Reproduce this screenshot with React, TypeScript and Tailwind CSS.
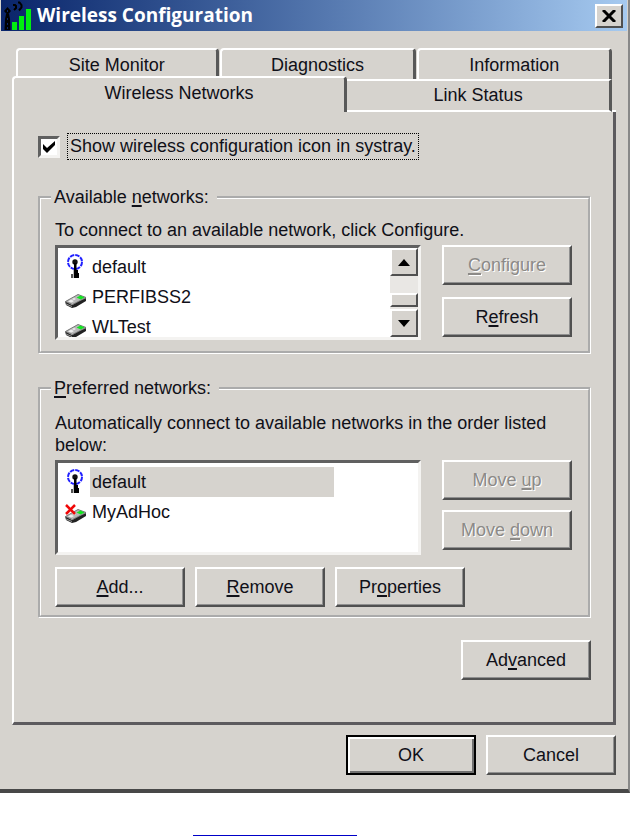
import { useState, type ReactNode } from "react";
import { clsx } from "clsx";

const raised = "border-2 border-t-white border-l-white border-r-[#505050] border-b-[#505050]";
const sunken = "border-[3px] border-t-[#606060] border-l-[#606060] border-r-[#f4f3f1] border-b-[#f4f3f1]";

interface ButtonProps {
  children: ReactNode;
  disabled?: boolean;
  primary?: boolean;
}

const Button = ({ children, disabled, primary }: ButtonProps) => (
  <button
    type="button"
    disabled={disabled}
    className={clsx(
      "h-10 w-[130px] shrink-0 bg-[#d6d3ce]",
      primary
        ? "border-2 border-black shadow-[inset_2px_2px_0_#fff,inset_-2px_-2px_0_#707070]"
        : "border-2 border-t-white border-l-white border-r-[#505050] border-b-[#505050] shadow-[inset_-1px_-1px_0_#909090]",
      disabled && "text-[#8c8a87] [text-shadow:1px_1px_0_#fff]",
    )}
  >
    {children}
  </button>
);

const Key = ({ children }: { children: ReactNode }) => (
  <span className="underline decoration-2 underline-offset-2">{children}</span>
);

const AppIcon = () => (
  <svg width="28" height="30" viewBox="0 0 28 30" aria-hidden="true">
    <g fill="#00f010">
      <rect x="8" y="21" width="5" height="8" />
      <rect x="15" y="15" width="5" height="14" />
      <rect x="22" y="8" width="5" height="21" />
    </g>
    <path d="M3.500 6l3.500 4-3.500 4L0 10z" fill="#000" />
    <path d="M2 13h3l1 5 .5 11h-6L1 18z" fill="#000" />
    <path d="M3.500 9v2M3.500 17v2M3.500 22v2M3.500 26v2" stroke="#0a246a" strokeWidth="1" />
    <g fill="none" stroke="#000" strokeWidth="2">
      <path d="M9 4h2l1 1v2l-2 2" />
      <path d="M14 1.500h1.500l2 2.500v2.500L15 9.500" />
    </g>
  </svg>
);

const AntennaIcon = () => (
  <svg className="shrink-0" width="22" height="26" viewBox="0 0 22 26" aria-hidden="true">
    <circle cx="10" cy="8" r="7" fill="none" stroke="#2020ff" strokeWidth="2" strokeDasharray="4.500 1" />
    <circle cx="10" cy="8" r="2.700" fill="#111" />
    <path d="M9 9h2.500v7H13v3h1v5H9z" fill="#000" />
    <path d="M6 20h2v4H6z" fill="#555" />
    <path d="M8.500 16v8" stroke="#bbb" strokeWidth="1" />
  </svg>
);

const AdapterIcon = ({ offline }: { offline?: boolean }) => (
  <svg className="shrink-0" width="22" height="26" viewBox="0 0 22 26" aria-hidden="true">
    <path d="M0 17l1 4 6 3 4-1 10-6v-3l-7 3-7 4z" fill="#222" />
    <path d="M.5 17.500L13 10.500l8 3-13.500 7z" fill="#b8b8b8" stroke="#777" strokeWidth="1" />
    <path d="M3 17.500l3-2 3 1.500-2.500 1.500zM7 15l2-1 2 1-2 1z" fill="#eee" />
    <path d="M1 20l6 2.500" stroke="#999" strokeWidth="1" />
    <path d="M11.500 13.500l4-2 4 2-4 2z" fill="#10e820" />
    {offline && <path d="M1 6l9 9M10 6l-9 9" stroke="#f00808" strokeWidth="2.500" />}
  </svg>
);

interface Network {
  name: string;
  kind: "antenna" | "adapter" | "offline";
}

const available: Network[] = [
  { name: "default", kind: "antenna" },
  { name: "PERFIBSS2", kind: "adapter" },
  { name: "WLTest", kind: "adapter" },
];

const preferred: Network[] = [
  { name: "default", kind: "antenna" },
  { name: "MyAdHoc", kind: "offline" },
];

const NetworkList = ({ label, items, selected }: { label: string; items: Network[]; selected?: number }) => (
  <ul role="listbox" aria-label={label} className="min-w-0 flex-1 overflow-hidden pt-1 pl-[7px]">
    {items.map((item, i) => (
      <li key={item.name} role="option" aria-selected={i === selected} className="flex h-[30px] items-center gap-[3px]">
        {item.kind === "antenna" ? <AntennaIcon /> : <AdapterIcon offline={item.kind === "offline"} />}
        <span className={clsx("w-[244px] pl-[2px] leading-[30px]", i === selected && "bg-[#d6d3ce]")}>{item.name}</span>
      </li>
    ))}
  </ul>
);

const ScrollButton = ({ up }: { up?: boolean }) => (
  <button
    type="button"
    aria-label={up ? "Scroll up" : "Scroll down"}
    className={clsx("flex h-7 items-center justify-center bg-[#d6d3ce]", raised)}
  >
    <svg width="12" height="7" viewBox="0 0 12 7" aria-hidden="true">
      <path d={up ? "M0 7l6-7 6 7z" : "M0 0h12L6 7z"} />
    </svg>
  </button>
);

const Group = ({ legend, children }: { legend: ReactNode; children: ReactNode }) => (
  <fieldset className="border-[3px] border-white [border-style:groove]">
    <legend className="ml-[10px] px-[3px] pr-2 leading-5">{legend}</legend>
    <div className="pr-4 pl-[14px]">{children}</div>
  </fieldset>
);

const tab = "border-t-2 border-l-2 border-r-[3px] border-t-white border-l-white border-r-[#585858] rounded-t-[4px] bg-[#d6d3ce]";

export default function App() {
  const [systray, setSystray] = useState(true);

  return (
    <div className="bg-white font-['Liberation_Sans',Arial,sans-serif] text-lg text-[#101018]">
      <main className="border-r-2 border-b-4 border-r-[#888] border-b-[#484848] bg-[#d6d3ce] pl-px">
        <header className="mr-px flex h-[31px] items-center bg-linear-to-r from-[#0a246a] to-[#a6caf0] pr-1 pl-[3px]">
          <AppIcon />
          <h1 className="flex-1 pl-[5px] font-['Open_Sans',sans-serif] text-[19px] font-bold text-white">
            Wireless Configuration
          </h1>
          <button
            type="button"
            aria-label="Close"
            className={clsx("flex h-6 w-7 items-center justify-center bg-[#d6d3ce]", raised)}
          >
            <svg width="14" height="12" viewBox="0 0 14 12" aria-hidden="true">
              <path d="M1 0l12 12M13 0L1 12" stroke="#000" strokeWidth="3" />
            </svg>
          </button>
        </header>

        <div className="pt-[17px] pr-3 pb-[14px] pl-[11px]">
          <div role="tablist">
            <div className="flex h-[31px] gap-px pr-1 pl-1 leading-[30px]">
              <button type="button" role="tab" aria-selected={false} className={clsx("w-[34%]", tab)}>Site Monitor</button>
              <button type="button" role="tab" aria-selected={false} className={clsx("w-[33%]", tab)}>Diagnostics</button>
              <button type="button" role="tab" aria-selected={false} className={clsx("flex-1", tab)}>Information</button>
            </div>
            <div className="flex">
              <button
                type="button"
                role="tab"
                aria-selected={true}
                className={clsx("relative -mt-[3px] h-[36px] w-[55.5%] pb-1 leading-[30px]", tab)}
              >
                Wireless Networks
              </button>
              <button
                type="button"
                role="tab"
                aria-selected={false}
                className="h-[33px] flex-1 border-t-2 border-r-[3px] border-b-2 border-t-white border-r-[#585858] border-b-white leading-[29px]"
              >
                Link Status
              </button>
              <div className="w-1 border-b-2 border-white" />
            </div>
          </div>

          <section
            role="tabpanel"
            className="border-r-[3px] border-b-[3px] border-l-2 border-r-[#5c5a5e] border-b-[#5c5a5e] border-l-white pt-[21px] pr-[22px] pb-[42px] pl-6"
          >
            <div className="flex items-center gap-2">
              <input
                id="systray"
                type="checkbox"
                checked={systray}
                onChange={(e) => setSystray(e.target.checked)}
                className={clsx("peer size-[22px] appearance-none bg-white", sunken)}
              />
              <svg
                className="pointer-events-none invisible -ml-[26px] peer-checked:visible"
                width="14"
                height="14"
                viewBox="0 0 14 14"
                aria-hidden="true"
              >
                <path d="M1 4l4 4 8-7v4l-8 8-4-4z" />
              </svg>
              <label htmlFor="systray" className="ml-[3px] border border-dotted border-black px-[2px] leading-[25px]">
                Show wireless configuration icon in systray.
              </label>
            </div>

            <div className="pt-[27px]">
              <Group legend={<>Available <Key>n</Key>etworks:</>}>
                <p className="pt-3 pb-1 leading-[22px]">To connect to an available network, click Configure.</p>
                <div className="flex items-start gap-[21px] pb-[11px]">
                  <div className={clsx("flex h-[95px] flex-1 bg-white", sunken)}>
                    <NetworkList label="Available networks" items={available} />
                    <div className="flex w-7 flex-col bg-[#e9e7e4]">
                      <ScrollButton up />
                      <div className="flex-1" />
                      <div className={clsx("mb-[2px] h-[14px] bg-[#d6d3ce]", raised)} />
                      <ScrollButton />
                    </div>
                  </div>
                  <div className="flex flex-col gap-3">
                    <Button disabled><Key>C</Key>onfigure</Button>
                    <Button>R<Key>e</Key>fresh</Button>
                  </div>
                </div>
              </Group>
            </div>

            <div className="pt-6">
              <Group legend={<><Key>P</Key>referred networks:</>}>
                <p className="pt-[14px] pb-1 leading-[22px]">
                  Automatically connect to available networks in the order listed below:
                </p>
                <div className="flex items-start gap-[21px]">
                  <div className={clsx("flex h-[95px] flex-1 bg-white", sunken)}>
                    <NetworkList label="Preferred networks" items={preferred} selected={0} />
                  </div>
                  <div className="flex flex-col gap-[10px]">
                    <Button disabled>Move <Key>u</Key>p</Button>
                    <Button disabled>Move <Key>d</Key>own</Button>
                  </div>
                </div>
                <div className="flex gap-[10px] pt-3 pb-2">
                  <Button><Key>A</Key>dd...</Button>
                  <Button><Key>R</Key>emove</Button>
                  <Button>Pr<Key>o</Key>perties</Button>
                </div>
              </Group>
            </div>

            <div className="flex justify-end pt-[22px]">
              <Button>Ad<Key>v</Key>anced</Button>
            </div>
          </section>

          <footer className="flex justify-end gap-[10px] pt-[10px]">
            <Button primary>OK</Button>
            <Button>Cancel</Button>
          </footer>
        </div>
      </main>
      <div className="ml-[193px] mt-[42px] h-px w-[164px] bg-[#0000c8]" />
    </div>
  );
}
